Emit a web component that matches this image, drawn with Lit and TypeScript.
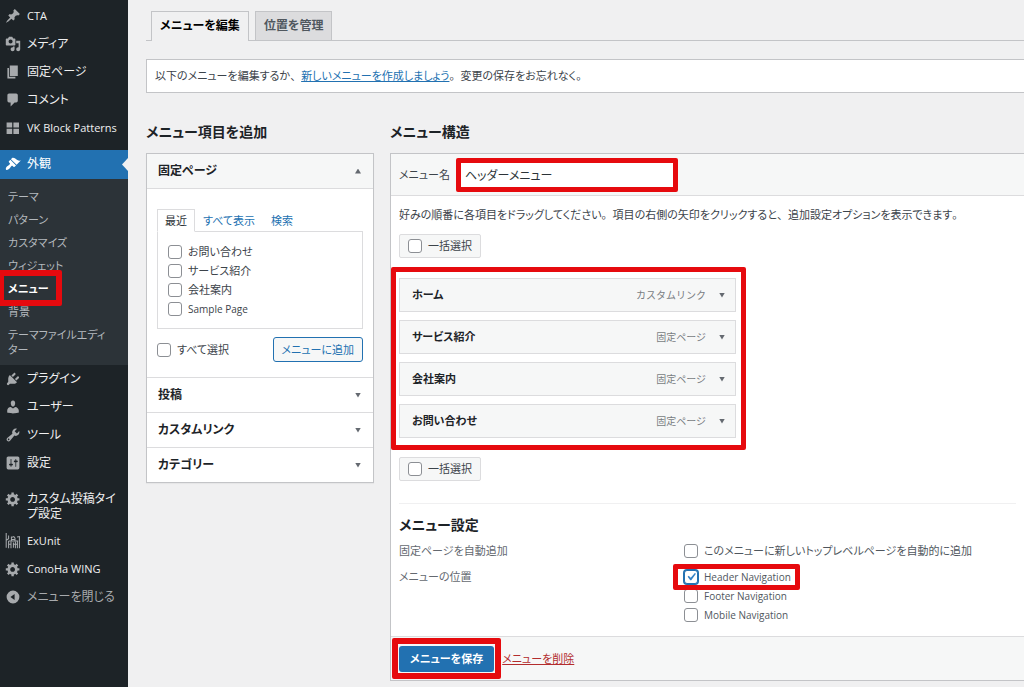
import { LitElement, html, css, svg } from "lit";
import { customElement } from "lit/decorators.js";
import { classMap } from "lit/directives/class-map.js";

const icons: Record<string, unknown> = {
  pin: svg`<path d="M10.44 3.02l1.82-1.82 6.36 6.35-1.83 1.82c-1.05-.68-2.48-.57-3.41.36l-.75.75c-.92.93-1.04 2.35-.35 3.41l-1.83 1.82-2.41-2.41-2.8 2.79c-.42.42-3.38 2.71-3.8 2.29s1.86-3.39 2.28-3.81l2.79-2.79L4.1 9.36l1.83-1.82c1.05.69 2.48.57 3.4-.36l.75-.75c.93-.92 1.05-2.35.36-3.41z"/>`,
  media: svg`<path d="M13 11V4c0-.55-.45-1-1-1h-1.67L9 1H5L3.67 3H2c-.55 0-1 .45-1 1v7c0 .55.45 1 1 1h10c.55 0 1-.45 1-1zM7 4.5c1.38 0 2.5 1.12 2.5 2.5S8.38 9.5 7 9.5 4.5 8.38 4.5 7 5.62 4.5 7 4.5zM14 6h5v10.5c0 1.38-1.12 2.5-2.5 2.5S14 17.88 14 16.5s1.12-2.5 2.5-2.5c.17 0 .34.02.5.05V9h-3V6zm-4 8.05V13h2v3.5c0 1.38-1.12 2.5-2.5 2.5S7 17.88 7 16.5 8.12 14 9.5 14c.17 0 .34.02.5.05z"/>`,
  page: svg`<path d="M6 15V2h10v13H6zm-1 1h8v2H3V5h2v11z"/>`,
  comment: svg`<path d="M5 2h9c1.1 0 2 .9 2 2v7c0 1.1-.9 2-2 2h-2l-5 5v-5H5c-1.1 0-2-.9-2-2V4c0-1.1.9-2 2-2z"/>`,
  blocks: svg`<path d="M2 3h7v6.5H2zM10.5 3h7v6.5h-7zM2 11h7v6.5H2zM10.5 11h7v6.5h-7z"/>`,
  brush: svg`<path d="M14.48 11.06L7.41 3.99l1.5-1.5c.5-.56 2.3-.47 3.51.32 1.21.8 1.43 1.28 2.91 2.1 1.18.64 2.45 1.26 4.45.85zm-.71.71L6.7 4.7 4.93 6.47c-.39.39-.39 1.02 0 1.41l1.06 1.06c.39.39.39 1.03 0 1.42-.6.6-1.43 1.11-2.21 1.69-.35.26-.7.53-1.01.84C1.43 14.23.4 16.08 1.4 17.07c.99 1 2.84-.03 4.18-1.36.31-.31.58-.66.85-1.02.57-.78 1.08-1.61 1.69-2.21.39-.39 1.02-.39 1.41 0l1.06 1.06c.39.39 1.02.39 1.41 0z"/>`,
  plugin: svg`<path d="M13.11 4.36L9.87 7.6 8 5.73l3.24-3.24c.35-.34 1.05-.2 1.56.32.52.51.66 1.21.31 1.55zm-8 1.77l.91-1.12 9.01 9.01-1.19.84c-.71.71-2.63 1.16-3.82 1.16H6.14L4.9 17.26c-.59.59-1.54.59-2.12 0-.59-.58-.59-1.53 0-2.12l1.24-1.24v-3.88c0-1.13.4-3.19 1.09-3.89zm7.26 3.97l3.24-3.24c.34-.35 1.04-.21 1.55.31.52.51.66 1.21.31 1.55l-3.24 3.25z"/>`,
  user: svg`<path d="M10 9.25c-2.27 0-2.73-3.44-2.73-3.44C7 4.02 7.82 2 9.97 2c2.16 0 2.98 2.02 2.71 3.81 0 0-.41 3.44-2.68 3.44zm0 2.57L12.72 10c2.39 0 4.52 2.33 4.52 4.53v2.49s-3.65 1.13-7.24 1.13c-3.65 0-7.24-1.13-7.24-1.13v-2.49c0-2.25 1.94-4.48 4.47-4.48z"/>`,
  wrench: svg`<path d="M16.68 9.77c-1.34 1.34-3.3 1.67-4.95.99l-5.41 6.52c-.99.99-2.59.99-3.58 0s-.99-2.59 0-3.57l6.52-5.42c-.68-1.65-.35-3.61.99-4.95 1.28-1.28 3.12-1.62 4.72-1.06l-2.89 2.89 2.82 2.82 2.86-2.87c.53 1.58.18 3.39-1.08 4.65zM3.81 16.21c.4.39 1.04.39 1.43 0 .4-.4.4-1.04 0-1.43-.39-.4-1.03-.4-1.43 0-.39.39-.39 1.03 0 1.43z"/>`,
  sliders: svg`<path d="M18 16V4c0-1.1-.9-2-2-2H4c-1.1 0-2 .9-2 2v12c0 1.1.9 2 2 2h12c1.1 0 2-.9 2-2zM8 11h1c.55 0 1 .45 1 1s-.45 1-1 1H8v1.5c0 .28-.22.5-.5.5s-.5-.22-.5-.5V13H6c-.55 0-1-.45-1-1s.45-1 1-1h1V5.5c0-.28.22-.5.5-.5s.5.22.5.5V11zm5-2h-1c-.55 0-1-.45-1-1s.45-1 1-1h1V5.5c0-.28.22-.5.5-.5s.5.22.5.5V7h1c.55 0 1 .45 1 1s-.45 1-1 1h-1v5.5c0 .28-.22.5-.5.5s-.5-.22-.5-.5V9z"/>`,
  gear: svg`<path d="M18 12h-2.18c-.17.7-.44 1.35-.81 1.93l1.54 1.54-2.1 2.1-1.54-1.54c-.58.36-1.23.63-1.91.79V19H8v-2.18c-.68-.16-1.33-.43-1.91-.79l-1.54 1.54-2.12-2.12 1.54-1.54c-.36-.58-.63-1.23-.79-1.91H1V9.03h2.17c.16-.7.44-1.35.8-1.94L2.43 5.55l2.1-2.1 1.54 1.54c.58-.37 1.24-.64 1.93-.81V2h3v2.18c.68.16 1.33.43 1.91.79l1.54-1.54 2.12 2.12-1.54 1.54c.36.59.64 1.24.8 1.94H18V12zm-8.5 1.5c1.66 0 3-1.34 3-3s-1.34-3-3-3-3 1.34-3 3 1.34 3 3 3z"/>`,
  exunit: svg`<g fill="none" stroke="currentColor" stroke-width="1.3"><path d="M1.500 0v18.500M4.500 3v4l-3 2M4.500 10v9M4.500 10h12M8 4.500v5.500M8 5.500l3-1 1.500 2v3.500M15 5l3-.5v14.500M7.500 11v8M10.500 12v6.500M13 11v8M15.500 10v9M4.500 14h3M10.500 14h5M7.500 8h5"/></g>`,
  collapse: svg`<path fill-rule="evenodd" d="M10 2a8 8 0 1 1 0 16 8 8 0 0 1 0-16zm2 4.200L6.800 10l5.200 3.800z"/>`,
};

interface NavItem { icon: string; label: string; current?: boolean; }

const navTop: NavItem[] = [
  { icon: "pin", label: "CTA" },
  { icon: "media", label: "メディア" },
  { icon: "page", label: "固定ページ" },
  { icon: "comment", label: "コメント" },
  { icon: "blocks", label: "VK Block Patterns" },
];
const navMiddle: NavItem[] = [
  { icon: "plugin", label: "プラグイン" },
  { icon: "user", label: "ユーザー" },
  { icon: "wrench", label: "ツール" },
  { icon: "sliders", label: "設定" },
];
const navBottom: NavItem[] = [
  { icon: "gear", label: "カスタム投稿タイプ設定" },
  { icon: "exunit", label: "ExUnit" },
  { icon: "gear", label: "ConoHa WING" },
];
const submenu = ["テーマ", "パターン", "カスタマイズ", "ウィジェット", "メニュー", "背景", "テーマファイルエディター"];

const isLatin = (text: string) => /^[\x20-\x7e]+$/.test(text);

// Kana are set proportionally, while commas and full stops keep their full-width space.
const prose = (text: string) =>
  text.split(/([、。])/).map((part) => (/[、。]/.test(part) ? html`<span class="full">${part}</span>` : part));

const shared = css`
  *, *::before, *::after { box-sizing: border-box; }
  a { color: #2271b1; }
  button, input { font: inherit; font-feature-settings: inherit; margin: 0; }
  h2, h3, p, ul { margin: 0; padding: 0; }
  ul { list-style: none; }
  .full { font-feature-settings: normal; }
  .marked { position: relative; }
  .marked::after {
    content: "";
    position: absolute;
    border: 5px solid #e60a0e;
    border-radius: 2px;
    pointer-events: none;
    z-index: 2;
  }
  .check { display: flex; align-items: center; gap: 6px; white-space: nowrap; }
  .check.latin { font-size: 10px; }
  .check input {
    appearance: none;
    flex: none;
    width: 14px;
    height: 14px;
    border: 1px solid #8c8f94;
    border-radius: 3px;
    background: #fff;
  }
  .check input:checked {
    border-color: #2271b1;
    box-shadow: 0 0 0 1px #2271b1;
    background: #fff url("data:image/svg+xml,%3Csvg xmlns='http://www.w3.org/2000/svg' viewBox='0 0 20 20'%3E%3Cpath d='M14.83 4.89l1.34.94-5.81 8.38H9.02L5.78 9.67l1.34-1.25 2.57 2.4z' fill='%233582c4'/%3E%3C/svg%3E") center / 16px no-repeat;
  }
  .caret {
    flex: none;
    width: 6px;
    height: 5px;
    background: #646970;
    clip-path: polygon(0 0, 100% 0, 50% 100%);
  }
  .caret.up { clip-path: polygon(50% 0, 100% 100%, 0 100%); }
`;

@customElement("admin-sidebar")
export class AdminSidebar extends LitElement {
  static styles = [shared, css`
    :host { display: block; background: #1d2327; padding-top: 2px; font-size: 12px; line-height: 15px; }
    .item {
      display: grid;
      grid-template-columns: 18px 1fr;
      gap: 5px;
      width: 100%;
      min-height: 28px;
      padding: 6px 4px;
      border: 0;
      background: none;
      color: #f0f0f1;
      text-align: left;
      text-decoration: none;
    }
    .item svg { width: 16px; height: 16px; margin-left: 1px; fill: #a7aaad; color: #a7aaad; }
    .item.latin { font-size: 11px; }
    .item.current { position: relative; min-height: 29px; background: #2271b1; color: #fff; }
    .item.current svg { fill: #fff; }
    .item.current::after {
      content: "";
      position: absolute;
      right: 0;
      top: 8px;
      width: 6px;
      height: 13px;
      background: #f0f0f1;
      clip-path: polygon(100% 0, 100% 100%, 0 50%);
    }
    .item.muted { color: #a7aaad; }
    .gap { height: 8px; }
    .submenu { background: #2c3338; padding: 6px 0 4px; font-size: 11px; }
    .submenu a { display: block; padding: 4px 16px 4px 8px; color: #b4b9be; text-decoration: none; }
    .submenu a.current { color: #fff; font-weight: 600; }
    .marked::after { border-width: 6px; inset: -7px 66px -6px -2px; }
  `];

  private item({ icon, label, current }: NavItem) {
    return html`<li><a href="#" class=${classMap({ item: true, current: !!current, latin: isLatin(label) })}>
      <svg viewBox="0 0 20 20" aria-hidden="true">${icons[icon]}</svg><span>${label}</span></a></li>`;
  }

  render() {
    return html`<nav aria-label="管理メニュー">
      <ul>
        ${navTop.map((n) => this.item(n))}
        <li class="gap"></li>
        ${this.item({ icon: "brush", label: "外観", current: true })}
        <li><ul class="submenu">${submenu.map((s) => html`
          <li class=${s === "メニュー" ? "marked" : ""}><a href="#" class=${s === "メニュー" ? "current" : ""}>${s}</a></li>`)}
        </ul></li>
        ${navMiddle.map((n) => this.item(n))}
        <li class="gap"></li>
        ${navBottom.map((n) => this.item(n))}
        <li><button class="item muted"><svg viewBox="0 0 20 20" aria-hidden="true">${icons.collapse}</svg><span>メニューを閉じる</span></button></li>
      </ul>
    </nav>`;
  }
}

@customElement("item-picker")
export class ItemPicker extends LitElement {
  static styles = [shared, css`
    :host { display: block; border: 1px solid #c3c4c7; background: #fff; box-shadow: 0 1px 1px rgba(0, 0, 0, .04); }
    h3 { font-size: 12px; line-height: 16px; }
    .toggle {
      display: flex;
      align-items: center;
      justify-content: space-between;
      width: 100%;
      height: 34px;
      padding: 0 12px 0 11px;
      border: 0;
      background: none;
      color: #1d2327;
      font-weight: 600;
    }
    .open { background: #f6f7f7; border-bottom: 1px solid #dcdcde; }
    .closed { border-top: 1px solid #dcdcde; }
    .body { padding: 20px 10px 15px; }
    .tabs { display: flex; line-height: 21px; }
    .tabs a { padding: 1px 8px 0; text-decoration: none; }
    .tabs a.active {
      position: relative;
      margin-bottom: -1px;
      border: 1px solid #dcdcde;
      border-bottom-color: #fff;
      background: #fff;
      color: #2c3338;
      padding: 0 7px;
    }
    .list { border: 1px solid #dcdcde; padding: 10px; }
    .list .check { height: 19px; }
    .actions { display: flex; align-items: center; justify-content: space-between; margin-top: 8px; }
    .add { height: 25px; padding: 0 8px; border: 1px solid #2271b1; border-radius: 3px; background: #f6f7f7; color: #2271b1; }
  `];

  render() {
    return html`
      <h3 class="open"><button class="toggle" aria-expanded="true">固定ページ<span class="caret up"></span></button></h3>
      <div class="body">
        <div class="tabs"><a href="#" class="active">最近</a><a href="#">すべて表示</a><a href="#">検索</a></div>
        <div class="list">${["お問い合わせ", "サービス紹介", "会社案内", "Sample Page"].map((t) => html`
          <label class=${classMap({ check: true, latin: isLatin(t) })}><input type="checkbox">${t}</label>`)}
        </div>
        <div class="actions">
          <label class="check"><input type="checkbox">すべて選択</label>
          <button class="add">メニューに追加</button>
        </div>
      </div>
      ${["投稿", "カスタムリンク", "カテゴリー"].map((t) => html`
        <h3 class="closed"><button class="toggle" aria-expanded="false">${t}<span class="caret"></span></button></h3>`)}`;
  }
}

@customElement("menu-editor")
export class MenuEditor extends LitElement {
  static styles = [shared, css`
    :host { display: block; border: 1px solid #c3c4c7; border-right: 0; background: #fff; }
    .head { display: flex; align-items: center; gap: 8px; height: 42px; padding: 0 8px; background: #f6f7f7; border-bottom: 1px solid #dcdcde; }
    .name { flex: 0 1 218px; }
    .name input { display: block; width: 100%; height: 26px; padding: 0 6px; border: 1px solid #8c8f94; border-radius: 3px; background: #fff; color: #2c3338; font-size: 12px; }
    .name::after { inset: -4px -2px; }
    .body { padding: 10px 8px 12px; }
    .intro { line-height: 18px; white-space: nowrap; }
    .bulk { display: inline-flex; height: 24px; padding: 0 8px; border: 1px solid #dcdcde; border-radius: 2px; background: #f6f7f7; }
    .bulk.top { margin-top: 10px; }
    .bulk.bottom { margin-top: 19px; }
    .items { display: grid; gap: 8px; max-width: 337px; margin-top: 20px; }
    .items::after { inset: -11px -10px -12px -8px; }
    .items li { display: flex; align-items: center; gap: 13px; height: 34px; padding: 0 10px 0 12px; border: 1px solid #dcdcde; background: #f6f7f7; }
    .items b { flex: 1; color: #1d2327; font-weight: 600; }
    .items .kind { color: #787c82; font-size: 10px; font-feature-settings: normal; }
    .settings { margin-top: 22px; border-top: 1px solid #f0f0f1; padding-top: 11px; }
    .settings h3 { color: #1d2327; font-size: 14px; line-height: 20px; font-weight: 600; margin-bottom: 6px; }
    .row { display: grid; grid-template-columns: 285px 1fr; line-height: 20px; color: #646970; }
    .row + .row { margin-top: 6px; }
    .row .check { height: 19px; width: max-content; color: #50575e; }
    .nav::after { inset: -3px -9px -4px -11px; }
    .foot { display: flex; align-items: center; gap: 8px; padding: 9px 8px 8px; border-top: 1px solid #dcdcde; background: #f6f7f7; }
    .save { height: 26px; padding: 0 11px; border: 0; border-radius: 3px; background: #2271b1; color: #fff; font-weight: 600; }
    .save-wrap { display: flex; }
    .save-wrap::after { border-width: 6px; inset: -8px -7px -7px; }
    .delete { color: #b32d2e; }
  `];

  private bulk(where: string) {
    return html`<div><label class="check bulk ${where}"><input type="checkbox">一括選択</label></div>`;
  }

  render() {
    const items = [
      ["ホーム", "カスタムリンク"],
      ["サービス紹介", "固定ページ"],
      ["会社案内", "固定ページ"],
      ["お問い合わせ", "固定ページ"],
    ];
    return html`
      <div class="head">
        <label for="menu-name">メニュー名</label>
        <div class="name marked"><input id="menu-name" type="text" .value=${"ヘッダーメニュー"}></div>
      </div>
      <div class="body">
        <p class="intro">${prose("好みの順番に各項目をドラッグしてください。項目の右側の矢印をクリックすると、追加設定オプションを表示できます。")}</p>
        ${this.bulk("top")}
        <ul class="items marked">${items.map(([t, k]) => html`
          <li><b>${t}</b><span class="kind">${k}</span><span class="caret"></span></li>`)}
        </ul>
        ${this.bulk("bottom")}
        <section class="settings">
          <h3>メニュー設定</h3>
          <div class="row"><span>固定ページを自動追加</span>
            <label class="check"><input type="checkbox">このメニューに新しいトップレベルページを自動的に追加</label></div>
          <div class="row"><span>メニューの位置</span>
            <div>${["Header Navigation", "Footer Navigation", "Mobile Navigation"].map((t, i) => html`
              <label class=${classMap({ check: true, latin: true, nav: i === 0, marked: i === 0 })}><input type="checkbox" ?checked=${i === 0}>${t}</label>`)}
            </div></div>
        </section>
      </div>
      <div class="foot">
        <div class="save-wrap marked"><button class="save">メニューを保存</button></div>
        <a href="#" class="delete">メニューを削除</a>
      </div>`;
  }
}

@customElement("app-root")
export class AppRoot extends LitElement {
  static styles = [shared, css`
    :host {
      display: grid;
      grid-template-columns: 128px minmax(0, 1fr);
      min-height: 100vh;
      overflow: hidden;
      background: #f0f0f1;
      color: #3c434a;
      font: 11px/16px "Open Sans", "Noto Sans CJK JP", sans-serif;
      font-feature-settings: "palt";
    }
    main { padding: 11px 0 6px 18px; }
    .tabs { display: flex; gap: 6px; padding-left: 5px; border-bottom: 1px solid #c3c4c7; }
    .tabs a {
      height: 29px;
      padding: 0 8px;
      border: 1px solid #c3c4c7;
      border-bottom: 0;
      background: #dcdcde;
      color: #50575e;
      font-size: 12px;
      line-height: 28px;
      font-weight: 600;
      text-decoration: none;
    }
    .tabs a.active { height: 30px; margin-bottom: -1px; background: #f0f0f1; color: #000; }
    .notice { margin-top: 18px; padding: 8px; border: 1px solid #c3c4c7; border-right: 0; background: #fff; }
    .columns { display: grid; grid-template-columns: 228px minmax(0, 1fr); gap: 16px; align-items: start; margin-top: 29px; }
    h2 { margin-bottom: 11px; color: #1d2327; font-size: 14px; line-height: 20px; font-weight: 600; }
  `];

  render() {
    return html`
      <admin-sidebar></admin-sidebar>
      <main>
        <nav class="tabs"><a href="#" class="active">メニューを編集</a><a href="#">位置を管理</a></nav>
        <p class="notice">${prose("以下のメニューを編集するか、")}<a href="#">新しいメニューを作成しましょう</a>${prose("。変更の保存をお忘れなく。")}</p>
        <div class="columns">
          <section><h2>メニュー項目を追加</h2><item-picker></item-picker></section>
          <section><h2>メニュー構造</h2><menu-editor></menu-editor></section>
        </div>
      </main>`;
  }
}
